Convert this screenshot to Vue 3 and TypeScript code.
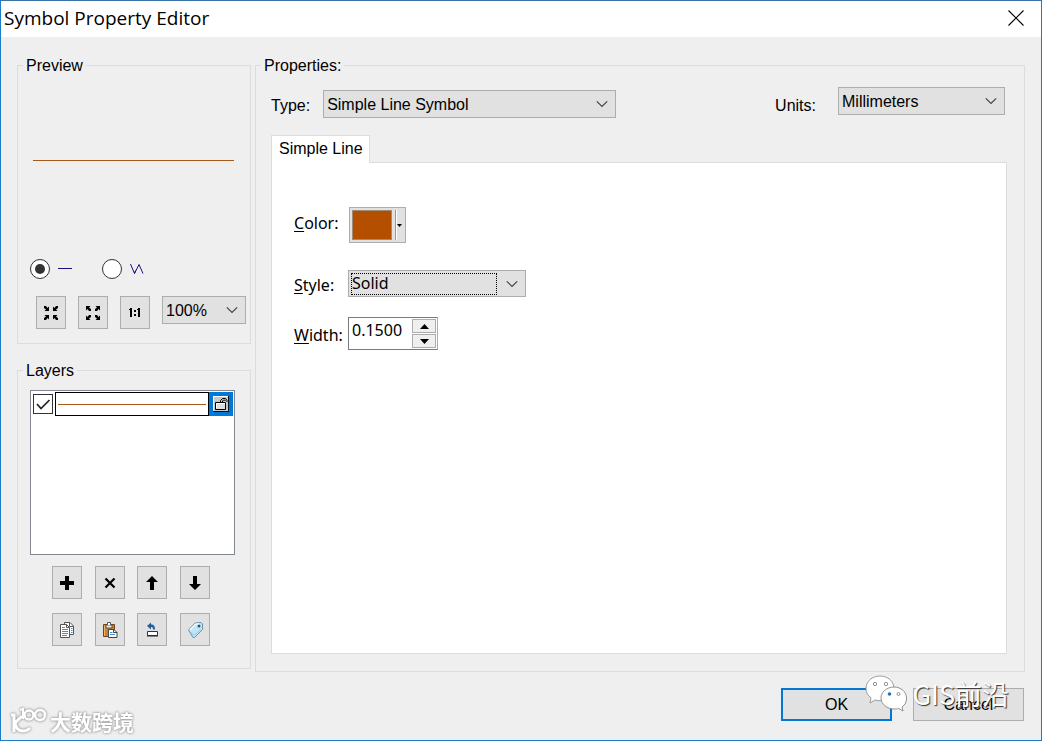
<script setup lang="ts">
import { ref } from 'vue'

const previewMode = ref<'line' | 'zigzag'>('line')
const zoom = ref('100%')
const symbolType = ref('Simple Line Symbol')
const units = ref('Millimeters')
const lineStyle = ref('Solid')
const lineWidth = ref('0.1500')
const layerVisible = ref(true)

function step(delta: number): void {
  const next = Math.max(0, Number(lineWidth.value) + delta)
  lineWidth.value = next.toFixed(4)
}
</script>

<template>
  <main class="dialog">
    <header class="titlebar">
      <h1>Symbol Property Editor</h1>
      <button class="close" type="button" aria-label="Close">
        <svg width="16" height="16" viewBox="0 0 16 16"><path d="M.5.5l15 15M15.5.5l-15 15" fill="none" stroke="#000" stroke-width="1.1" /></svg>
      </button>
    </header>

    <div class="body">
      <div class="side">
        <fieldset class="group preview">
          <legend>Preview</legend>
          <div class="canvas"><div class="stroke"></div></div>
          <div class="modes">
            <label>
              <input v-model="previewMode" type="radio" name="mode" value="line" aria-label="Straight line" />
              <svg width="14" height="14" viewBox="0 0 14 14"><path d="M0 6.5h14" stroke="#1a0f7d" /></svg>
            </label>
            <label>
              <input v-model="previewMode" type="radio" name="mode" value="zigzag" aria-label="Zigzag line" />
              <svg width="14" height="14" viewBox="0 0 14 14"><path d="M.5 2l4 9.500 1-3M4.500 11.500L9 2.500l4 9M.5 2" fill="none" stroke="#1a0f7d" /></svg>
            </label>
          </div>
          <div class="zoombar">
            <button class="tool" type="button" aria-label="Zoom out">
              <svg width="14" height="14" viewBox="0 0 14 14">
                <path id="corner-in" d="M0 0h2l1.500 2L5 .5V5H.5L2 3.500 0 2z" />
                <use href="#corner-in" transform="matrix(-1 0 0 1 14 0)" />
                <use href="#corner-in" transform="matrix(1 0 0 -1 0 14)" />
                <use href="#corner-in" transform="matrix(-1 0 0 -1 14 14)" />
              </svg>
            </button>
            <button class="tool" type="button" aria-label="Zoom in">
              <svg width="14" height="14" viewBox="0 0 14 14">
                <path id="corner-out" d="M0 0h4.500L3 1.500 5 3v2H3L1.500 3 0 4.500z" />
                <use href="#corner-out" transform="matrix(-1 0 0 1 14 0)" />
                <use href="#corner-out" transform="matrix(1 0 0 -1 0 14)" />
                <use href="#corner-out" transform="matrix(-1 0 0 -1 14 14)" />
              </svg>
            </button>
            <button class="tool" type="button" aria-label="Actual size">
              <svg width="14" height="14" viewBox="0 0 14 14"><path d="M2 2h2v9H2zM10 2h2v9h-2zM6 4h2v2H6zM6 8h2v2H6zM1 3h1v1H1zM9 3h1v1H9z" /></svg>
            </button>
            <div class="select percent">
              <select v-model="zoom" aria-label="Zoom level"><option>100%</option><option>200%</option></select>
              <svg class="chevron" width="12" height="8" viewBox="0 0 12 8"><path d="M.8 1.300L6 6.500l5.200-5.200" /></svg>
            </div>
          </div>
        </fieldset>

        <fieldset class="group layers">
          <legend>Layers</legend>
          <div class="list">
            <div class="row">
              <span class="check">
                <input v-model="layerVisible" type="checkbox" aria-label="Layer visible" />
                <svg v-if="layerVisible" width="20" height="20" viewBox="0 0 20 20"><path d="M4 10l4 4.500L16.500 6" fill="none" stroke="#222" stroke-width="1.700" /></svg>
              </span>
              <div class="sample"><div class="stroke"></div></div>
              <button class="lock" type="button" aria-label="Lock layer">
                <svg width="16" height="16" viewBox="0 0 16 16">
                  <path d="M0 0h16v16H0z" fill="#111" /><path d="M0 0h15v15H0z" fill="#fff" /><path d="M1 1h14v14H1z" fill="#c8c8c8" />
                  <path d="M2.500 6.500h10v7h-10z" fill="#ddd" stroke="#000" />
                  <path d="M3.500 12V7.500H12" fill="none" stroke="#fff" />
                  <path d="M7.500 6V4.500l2-2h3l1.500 2V6M9.500 6V5l1-1h1l1 1" fill="none" stroke="#000" />
                </svg>
              </button>
            </div>
          </div>
          <div class="tools">
            <button class="tool" type="button" aria-label="Add layer">
              <svg width="14" height="14" viewBox="0 0 14 14"><path d="M5 0h4v5h5v4H9v5H5V9H0V5h5z" /></svg>
            </button>
            <button class="tool" type="button" aria-label="Delete layer">
              <svg width="14" height="14" viewBox="0 0 14 14"><path d="M2.500 2.500l9 9M11.500 2.500l-9 9" stroke="#000" stroke-width="2.200" /></svg>
            </button>
            <button class="tool" type="button" aria-label="Move layer up">
              <svg width="14" height="14" viewBox="0 0 14 14"><path d="M7 0l6 6H9v8H5V6H1z" /></svg>
            </button>
            <button class="tool" type="button" aria-label="Move layer down">
              <svg width="14" height="14" viewBox="0 0 14 14"><path d="M7 14l6-6H9V0H5v8H1z" /></svg>
            </button>
            <button class="tool" type="button" aria-label="Copy layer">
              <svg width="16" height="16" viewBox="0 0 16 16">
                <path d="M5.500.5h5.500l3.500 3.500v8.500h-9z" fill="#fff" stroke="#555" />
                <path d="M10.500.5V4.500h4" fill="none" stroke="#555" />
                <path d="M12 6.500h1.500M12 8.500h1.500M12 10.500h1.500" stroke="#4682b4" />
                <path d="M1.500 2.500h6l3 3v10h-9z" fill="#fff" stroke="#555" />
                <path d="M7.500 2.500v3h3" fill="none" stroke="#555" />
                <path d="M3 5.500h3M3 7.500h6M3 9.500h6M3 11.500h6M3 13.500h5" stroke="#4a8ccc" />
              </svg>
            </button>
            <button class="tool" type="button" aria-label="Paste layer">
              <svg width="16" height="16" viewBox="0 0 16 16">
                <path d="M1.500 2.500h11v12h-11z" fill="#c98235" stroke="#70451c" />
                <path d="M2.500 14V3.500" stroke="#f0b35e" />
                <path d="M4 3h6v3H4z" fill="#eee" stroke="#555" /><path d="M5.500 3V.5h3V3" fill="#fff" stroke="#555" />
                <path d="M6.500 7.500h5.500l3 3v5H6.500z" fill="#fff" stroke="#444" />
                <path d="M11.500 7.500v3H15" fill="none" stroke="#444" />
                <path d="M8 10.500h2.500M8 12.500h5" stroke="#4a8ccc" />
              </svg>
            </button>
            <button class="tool" type="button" aria-label="Reset layer">
              <svg width="14" height="16" viewBox="0 0 14 16">
                <path d="M2 4l4-3.500v2c3 0 4 1.500 4 5h-2c0-2-.5-2.500-2-2.500v2.500z" fill="#245d9c" />
                <path d="M2.500 9.500h10v4h-10z" fill="#fff" stroke="#333" /><path d="M2 14h11" stroke="#222" />
              </svg>
            </button>
            <button class="tool" type="button" aria-label="Tag layer">
              <svg width="18" height="18" viewBox="0 0 18 18">
                <path d="M2.500 9l6.500-7 6-.5 1.500 1.500v5.500L8.500 16.500H7z" fill="#c1e5f7" stroke="#6095ad" stroke-linejoin="round" />
                <path d="M4 9l5.500-5.800 4-.2" fill="none" stroke="#eefaff" stroke-width="1.500" />
                <path d="M5 11l3 3.500 6.500-6" fill="none" stroke="#94cbea" />
                <circle cx="13" cy="5" r="1.500" fill="#34546a" />
              </svg>
            </button>
          </div>
        </fieldset>
      </div>

      <fieldset class="group properties">
        <legend>Properties:</legend>
        <div class="topline">
          <label for="type">Type:</label>
          <div class="select type">
            <select id="type" v-model="symbolType"><option>Simple Line Symbol</option><option>Marker Line Symbol</option></select>
            <svg class="chevron" width="12" height="8" viewBox="0 0 12 8"><path d="M.8 1.300L6 6.500l5.200-5.200" /></svg>
          </div>
          <label class="units-label" for="units">Units:</label>
          <div class="select units">
            <select id="units" v-model="units"><option>Millimeters</option><option>Points</option></select>
            <svg class="chevron" width="12" height="8" viewBox="0 0 12 8"><path d="M.8 1.300L6 6.500l5.200-5.200" /></svg>
          </div>
        </div>
        <div role="tablist" class="tabs">
          <button type="button" role="tab" aria-selected="true" class="tab">Simple Line</button>
        </div>
        <div role="tabpanel" class="panel">
          <label class="color-label" for="color"><u>C</u>olor:</label>
          <button id="color" class="color" type="button" aria-label="Color">
            <span class="chip"></span>
            <span class="drop"><svg width="5" height="3" viewBox="0 0 5 3"><path d="M0 0h5L2.500 3z" /></svg></span>
          </button>
          <label class="style-label" for="style"><u>S</u>tyle:</label>
          <div class="select style">
            <select id="style" v-model="lineStyle"><option>Solid</option><option>Dashed</option></select>
            <span class="focus"></span>
            <svg class="chevron" width="12" height="8" viewBox="0 0 12 8"><path d="M.8 1.300L6 6.500l5.200-5.200" /></svg>
          </div>
          <label class="width-label" for="width"><u>W</u>idth:</label>
          <div class="spin">
            <input id="width" v-model="lineWidth" type="text" />
            <div class="arrows">
              <button type="button" aria-label="Increase" @click="step(0.1)"><svg width="9" height="5" viewBox="0 0 9 5"><path d="M0 5h9L4.500 0z" /></svg></button>
              <button type="button" aria-label="Decrease" @click="step(-0.1)"><svg width="9" height="5" viewBox="0 0 9 5"><path d="M0 0h9L4.500 5z" /></svg></button>
            </div>
          </div>
        </div>
      </fieldset>
    </div>

    <footer class="actions">
      <button class="action primary" type="button">OK</button>
      <button class="action" type="button">Cancel</button>
    </footer>

    <div class="mark mark-left">
      <svg width="38" height="28" viewBox="0 0 38 28" fill="none" stroke="#fff" stroke-width="3">
        <path d="M2 8h3v17M13 9l-7 7c1 6 4 8 8 8 3 0 5-1 7-3" />
        <path d="M11 3l3-1v10" stroke-width="2" />
        <circle cx="20" cy="8" r="4.500" stroke-width="2.500" /><circle cx="31" cy="8" r="5" stroke-width="2.500" />
      </svg>
      <span>大数跨境</span>
    </div>
    <div class="mark mark-right">
      <svg width="42" height="38" viewBox="0 0 42 38">
        <path d="M15 1C7 1 1 6.500 1 13.500c0 4 2 7 5 9.500l-1 5 5-3c8 2.500 19-2 19-11.500C29 6.500 23 1 15 1z" fill="#fff" stroke="#888" stroke-width=".8" />
        <path d="M29 12c-7 0-13 5-13 11s6 11 13 11c2 0 3 0 4.500-.6L38 36l-1-4c3-2 4.500-5 4.500-9 0-6-5.500-11-12.500-11z" fill="#fff" stroke="#777" stroke-width=".8" />
        <g fill="#fff" stroke="#777" stroke-width=".8"><circle cx="10" cy="9" r="1.700" /><circle cx="21" cy="9" r="1.700" /><circle cx="33.500" cy="19" r="1.500" /></g>
        <circle cx="24.500" cy="19" r="1.800" fill="#2473b8" />
      </svg>
      <span>GIS前沿</span>
    </div>
  </main>
</template>

<style>
body {
  margin: 0;
}
</style>

<style scoped>
* {
  box-sizing: border-box;
}
.dialog {
  position: relative;
  display: flex;
  flex-direction: column;
  min-height: 100vh;
  border: 1px solid #1b7dca;
  border-top-color: #3a72a8;
  background: #efefef;
  color: #000;
  font: 16px/19px "Liberation Sans", Arial, sans-serif;
}
button,
input,
select {
  margin: 0;
  padding: 0;
  border-radius: 0;
  font: inherit;
  color: inherit;
}
svg {
  display: block;
}
.titlebar {
  display: flex;
  align-items: center;
  justify-content: space-between;
  height: 36px;
  padding: 0 17px 2px 3px;
  background: #fff;
}
h1 {
  margin: 0;
  font: 19px/24px "Open Sans", "Noto Sans", sans-serif;
}
.close {
  border: 0;
  background: none;
}
.body {
  flex: 1;
  display: flex;
  gap: 4px;
  padding: 19px 16px 0;
}
.side {
  display: flex;
  flex-direction: column;
  gap: 17px;
  width: 234px;
  padding-bottom: 3px;
}
.group {
  min-width: 0;
  margin: 0;
  padding: 0;
  border: 1px solid #dcdcdc;
}
legend {
  margin-left: 5px;
  padding: 0 3px;
}
.canvas {
  display: flex;
  align-items: center;
  height: 171px;
  padding: 0 16px 0 15px;
}
.stroke {
  flex: 1;
  height: 1px;
  background: #a85a18;
}
.modes {
  display: flex;
  gap: 30px;
  margin: 13px 12px 0;
}
.modes label {
  display: flex;
  align-items: center;
  gap: 8px;
}
.modes input {
  appearance: none;
  display: grid;
  place-items: center;
  width: 20px;
  height: 20px;
  border: 1px solid #333;
  border-radius: 50%;
  background: #fff;
}
.modes input:checked::before {
  content: "";
  width: 10px;
  height: 10px;
  border-radius: 50%;
  background: #333;
}
.zoombar {
  display: flex;
  align-items: flex-end;
  gap: 12px;
  margin: 17px 4px 14px 18px;
}
.zoombar .select {
  flex: 1;
  align-self: flex-start;
}
.tool {
  display: grid;
  place-items: center;
  width: 30px;
  height: 33px;
  border: 1px solid #adadad;
  background: #e1e1e1;
}
.select {
  display: grid;
  grid-template-columns: 1fr;
  height: 28px;
}
.select > * {
  grid-area: 1 / 1;
}
.select select {
  appearance: none;
  width: 100%;
  height: 100%;
  padding: 0 22px 0 3px;
  border: 1px solid #adadad;
  background: #e1e1e1;
}
.chevron {
  align-self: center;
  justify-self: end;
  margin-right: 8px;
  fill: none;
  stroke: #444;
  stroke-width: 1.2;
  pointer-events: none;
}
.layers {
  flex: 1;
}
.list {
  height: 165px;
  margin: 10px 15px 0 12px;
  padding: 1px;
  border: 1px solid #828790;
  background: #fff;
}
.row {
  display: flex;
  height: 24px;
}
.check {
  display: grid;
  align-self: center;
  margin: 0 2px 0 1px;
}
.check > * {
  grid-area: 1 / 1;
  pointer-events: none;
}
.check input {
  appearance: none;
  width: 20px;
  height: 20px;
  border: 1px solid #333;
  pointer-events: auto;
}
.sample {
  flex: 1;
  display: flex;
  align-items: center;
  padding: 1px 2px 0;
  border: 1px solid #000;
}
.lock {
  display: grid;
  place-items: center;
  width: 24px;
  border: 0;
  background: #0078d7;
}
.tools {
  display: grid;
  grid-template-columns: repeat(4, 30px);
  justify-content: space-between;
  row-gap: 14px;
  margin: 11px 40px 21px 34px;
}
.properties {
  flex: 1;
  display: flex;
  flex-direction: column;
  padding: 0 17px 17px 15px;
}
.properties legend {
  margin-left: -10px;
}
.topline {
  display: flex;
  align-items: center;
  padding-top: 12px;
}
.type {
  flex: 0 1 293px;
  margin: 3px 0 0 13px;
}
.topline label {
  padding-top: 5px;
}
.units-label {
  margin-left: auto;
}
.units {
  width: 167px;
  margin: 0 2px 3px 22px;
}
.tabs {
  display: flex;
  margin: 17px 0 -1px;
}
.tab {
  z-index: 1;
  height: 28px;
  padding: 0 6px 2px 7px;
  border: 1px solid #dcdcdc;
  border-bottom: 0;
  background: #fff;
}
.panel {
  flex: 1;
  display: grid;
  grid-template-columns: 54px 1fr;
  align-content: start;
  align-items: center;
  padding: 44px 22px;
  border: 1px solid #dcdcdc;
  background: #fff;
  font-family: "Noto Sans", "Open Sans", sans-serif;
}
.panel u {
  text-underline-offset: 2px;
}
.panel .select select,
.spin input {
  font-family: "Noto Sans", "Open Sans", sans-serif;
}
.color {
  display: flex;
  width: 57px;
  height: 36px;
  margin: 0 0 27px 1px;
  padding: 2px;
  border: 1px solid #adadad;
  background: #e1e1e1;
}
.color-label {
  margin-bottom: 31px;
}
.chip {
  width: 40px;
  height: 30px;
  border: 1px solid #a28c78;
  background: #b44f00;
}
.drop {
  flex: 1;
  align-self: stretch;
  display: grid;
  place-items: center;
  margin-left: 3px;
  border-left: 1px solid #999;
  box-shadow: inset 1px 0 #fff;
}
.style {
  width: 178px;
  height: 27px;
  margin-bottom: 20px;
}
.style-label {
  margin-bottom: 17px;
}
.width-label {
  padding-top: 3px;
}
.focus {
  margin: 3px 29px 2px 3px;
  border: 1px dotted #000;
  pointer-events: none;
}
.spin {
  display: flex;
  width: 90px;
  height: 33px;
  border: 1px solid #7a7a7a;
  border-right-color: #adadad;
}
.spin input {
  flex: 1;
  min-width: 0;
  padding: 0 0 6px 3px;
  border: 0;
  background: #fff;
  outline: 0;
}
.arrows {
  display: grid;
  gap: 1px;
  width: 26px;
  padding: 1px;
  background: #fff;
}
.arrows button {
  display: grid;
  place-items: center;
  border: 1px solid #adadad;
  background: #efefef;
}
.actions {
  display: flex;
  justify-content: flex-end;
  gap: 21px;
  padding: 16px 17px 19px;
}
.action {
  width: 111px;
  height: 33px;
  border: 1px solid #adadad;
  background: #e1e1e1;
}
.primary {
  border: 2px solid #0078d7;
}
.mark {
  position: absolute;
  display: flex;
  align-items: center;
  color: #fff;
  white-space: nowrap;
  pointer-events: none;
}
.mark-left {
  left: 8px;
  bottom: 5px;
  gap: 3px;
  font: bold 21px/28px "Noto Sans CJK SC", sans-serif;
  filter: drop-shadow(0 0 1px #999) drop-shadow(0 0 1px #bbb);
}
.mark-right {
  right: 32px;
  bottom: 27px;
  gap: 5px;
  font: 27px/38px "Noto Sans CJK SC", sans-serif;
}
.mark-right span {
  text-shadow: 1px 1px 1px #333;
}
</style>
